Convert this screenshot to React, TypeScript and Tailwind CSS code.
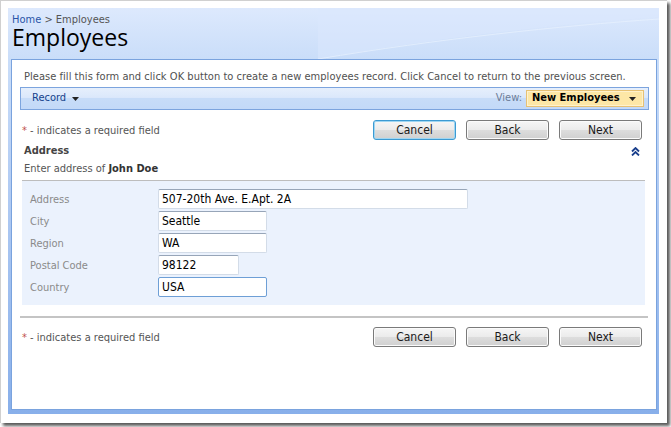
import React from "react";

const F = { fontFamily: '"DejaVu Sans Condensed","DejaVu Sans",sans-serif' };

function Btn({ label, focus }: { label: string; focus?: boolean }) {
  return (
    <button
      className={
        "w-[83px] h-[20px] rounded-[3px] border text-[12px] leading-none text-[#1a1a1a] bg-[linear-gradient(to_bottom,#f6f6f6_0%,#ebebeb_50%,#dddddd_51%,#d0d0d0_100%)] " +
        (focus ? "border-[#3c9ad2] shadow-[inset_0_0_0_1px_#9fd6f2]" : "border-[#7a7a7a] shadow-[inset_0_0_0_1px_#fbfbfb]")
      }
      style={F}
    >
      {label}
    </button>
  );
}

function ButtonRow({ focus }: { focus?: boolean }) {
  return (
    <div className="flex items-center justify-between pl-[10px] pr-[14px] h-[20px]">
      <span className="text-[11px] text-[#555] pt-[2px]">
        <span className="text-[#c0504d]">*</span> - indicates a required field
      </span>
      <div className="flex gap-[10px]">
        <Btn label="Cancel" focus={focus} />
        <Btn label="Back" />
        <Btn label="Next" />
      </div>
    </div>
  );
}

function Field({ label, value, w, focus }: { label: string; value: string; w: string; focus?: boolean }) {
  return (
    <div className="flex items-center h-[22px]">
      <div className="w-[136px] pl-[8px] pt-[2px] text-[11px] text-[#8a8a8a]">{label}</div>
      <div
        className={
          "h-[20px] flex items-center pl-[3px] text-[12px] text-black bg-white border rounded-[2px] " +
          w +
          (focus ? " border-[#6e9fd6]" : " border-[#d3dce8] border-t-[#97a5b8]")
        }
      >
        {value}
      </div>
    </div>
  );
}

export default function App() {
  return (
    <div className="w-[671px] h-[427px] bg-white overflow-hidden" style={F}>
      <div className="w-[667px] h-[423px] bg-white border-l border-t border-[#d0d0d0] shadow-[3px_3px_3px_rgba(0,0,0,0.65)] pt-[7px] pl-[7px] pr-[7px] pb-[8px]">
        <div className="relative w-[651px] h-[406px] flex flex-col pl-[3px] pr-[2px] pb-[4px] bg-[linear-gradient(to_bottom,#dde9fd_0%,#c9ddf9_13%,#b1cbf3_45%,#88afea_100%)]">
          <svg className="absolute left-0 top-0" width="651" height="51" viewBox="0 0 651 51">
            <path d="M310 51 C 430 30, 550 16, 651 9 L651 0 L 310 0 Z" fill="#dae8fd" opacity="0.55" />
            <path d="M310 51 C 430 31, 550 18, 651 11" stroke="#e6f0fe" strokeWidth="1" fill="none" opacity="0.8" />
          </svg>
          <div className="relative h-[51px] pl-[1px]">
            <div className="pt-[5px] text-[11px] leading-[13px]">
              <span className="text-[#2a55a8]">Home</span>
              <span className="text-[#555]"> &gt; Employees</span>
            </div>
            <div className="text-[23px] leading-[23px] text-black" style={{ fontFamily: '"Open Sans","DejaVu Sans",sans-serif' }}>
              Employees
            </div>
          </div>
          <div className="relative flex-1 bg-white border border-[#7aa3de] flex flex-col">
            <p className="mt-[10px] pl-[12px] text-[11px] leading-[14px] text-[#505050] tracking-[0.04px]">
              Please fill this form and click OK button to create a new employees record. Click Cancel to return to the previous screen.
            </p>
            <div className="mt-[3px] ml-[8px] mr-[7px] h-[23px] border border-[#7ca4de] flex items-center justify-between bg-[linear-gradient(to_bottom,#e6effc_0%,#dbe8fb_45%,#c7dcf8_50%,#c3d9f8_100%)]">
              <div className="flex items-center pl-[11px] gap-[6px] text-[11px] text-[#15428b]">
                Record
                <svg width="7" height="4" viewBox="0 0 7 4"><path d="M0 0 H7 L3.5 4 Z" fill="#222" /></svg>
              </div>
              <div className="flex items-center gap-[4px] pr-[4px]">
                <span className="text-[11px] text-[#6b7c98]">View:</span>
                <div className="w-[118px] h-[17px] border border-[#e7c173] bg-[#fde7a6] shadow-[inset_0_0_0_1px_#fff2cc] flex items-center justify-between pl-[5px] pr-[7px]">
                  <span className="text-[11px] font-bold text-black">New Employees</span>
                  <svg width="7" height="4" viewBox="0 0 7 4"><path d="M0 0 H7 L3.5 4 Z" fill="#222" /></svg>
                </div>
              </div>
            </div>
            <div className="mt-[10px]">
              <ButtonRow focus />
            </div>
            <div className="mt-[4px] pl-[12px] pr-[16px] h-[14px] flex items-center justify-between">
              <span className="text-[11px] font-bold text-[#444]">Address</span>
              <svg width="9" height="9" viewBox="0 0 9 9">
                <path d="M1 4.5 L4.5 1 L8 4.5 M1 8.5 L4.5 5 L8 8.5" stroke="#1a3f8c" strokeWidth="1.8" fill="none" />
              </svg>
            </div>
            <div className="mt-[4px] pl-[12px] h-[14px] text-[11px] leading-[14px] text-[#555]">
              Enter address of <span className="font-bold text-[#333]">John Doe</span>
            </div>
            <div className="mt-[4px] ml-[10px] mr-[11px] h-px bg-[#bdbdbd]" />
            <div className="ml-[10px] mr-[11px] h-[124px] bg-[#ebf2fd] pt-[7px]">
              <Field label="Address" value="507-20th Ave. E.Apt. 2A" w="w-[310px]" />
              <Field label="City" value="Seattle" w="w-[109px]" />
              <Field label="Region" value="WA" w="w-[109px]" />
              <Field label="Postal Code" value="98122" w="w-[81px]" />
              <Field label="Country" value="USA" w="w-[109px]" focus />
            </div>
            <div className="mt-[11px] ml-[8px] mr-[8px] h-[2px] bg-[#c4c4c4]" />
            <div className="mt-[9px]">
              <ButtonRow />
            </div>
          </div>
        </div>
      </div>
    </div>
  );
}
